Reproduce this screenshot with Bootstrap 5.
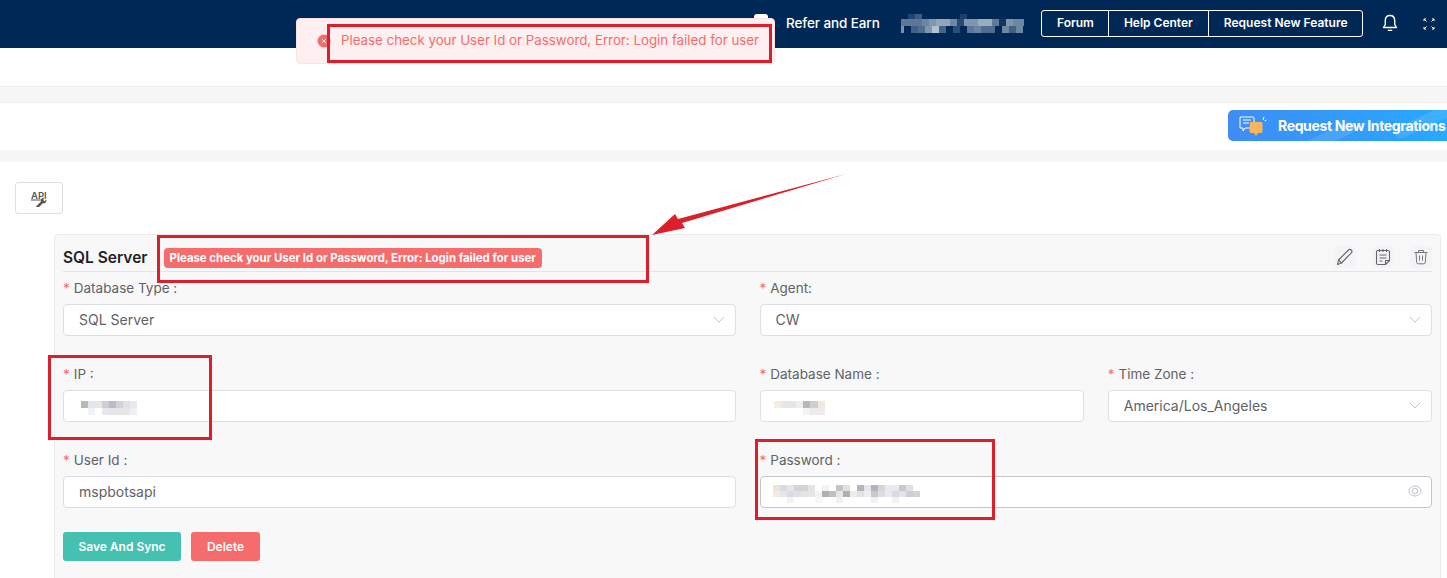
<!DOCTYPE html>
<html lang="en">
<head>
  <meta charset="UTF-8">
  <meta name="viewport" content="width=device-width, initial-scale=1">
  <title>SQL Server Integration</title>
  <link href="https://cdn.jsdelivr.net/npm/bootstrap@5.3.3/dist/css/bootstrap.min.css" rel="stylesheet">
  <style>
    html, body { height: 100%; overflow: hidden; }
    body { font-family: Inter, "Liberation Sans", sans-serif; font-size: 14px; color: #606266; background: #fff; position: relative; }

    .top-header { height: 48px; background: #002856; color: #fff; padding-left: 754px; }
    .refer-icon { width: 14px; height: 20px; background: #fff; border-radius: 3px; margin-right: 18px; }
    .refer-text { font-size: 13.5px; font-weight: 500; width: 115px; letter-spacing: -.1px; margin-top: -2px; }
    .user-blur { width: 123px; height: 19px; margin-right: 17px; margin-top: -1px; }
    .link-group { height: 27px; border: 1px solid #fff; border-radius: 3px; margin-right: 18px; margin-top: -1px; }
    .link-group a { color: #fff; font-size: 12px; font-weight: 600; text-decoration: none; padding: 0 15px; line-height: 23px; }
    .link-group a:first-child { padding-right: 14px; }
    .link-group a + a { border-left: 1px solid #fff; }
    .bell-icon { margin-right: 24px; margin-top: -2px; }

    .blank-strip { height: 38px; background: #fff; }
    .gray-strip { height: 16px; background: #f7f7f7; border-top: 1px solid #eee; }
    .action-strip { height: 48px; background: #fff; border-top: 1px solid #efefef; box-shadow: 0 1px 2px rgba(0,0,0,.06); padding-top: 7px; }
    .gray-strip-2 { height: 12px; background: #f7f7f7; }

    .integration-btn { position: relative; width: 219px; height: 31px; margin-left: auto; border-radius: 5px 0 0 5px; color: #fff; font-size: 14px; font-weight: 700; letter-spacing: -.36px; white-space: nowrap; overflow: hidden; padding-left: 11px; background: linear-gradient(90deg, #3f8cf4, #27a9ff); }
    .integration-btn::before, .integration-btn::after { content: ""; position: absolute; height: 12px; border-radius: 6px; background: rgba(255,255,255,.1); transform: rotate(-25deg); }
    .integration-btn::before { width: 70px; left: 60px; top: 24px; }
    .integration-btn::after { width: 60px; left: 165px; top: 6px; }
    .integration-btn svg { margin-right: 11px; flex: none; position: relative; z-index: 1; }
    .integration-btn span { position: relative; z-index: 1; }

    .page-body { padding: 20px 6px 0 15px; }
    .api-btn { width: 48px; height: 32px; padding: 0; border: 1px solid #dcdfe6; border-radius: 3px; background: #fff; }
    .db-panel { margin: 20px 0 0 39px; padding: 0 8px 40px; background: #f8f8f9; border: 1px solid #ebebeb; border-radius: 4px; }
    .panel-head { height: 37px; border-bottom: 1px solid #e4e4e4; padding-top: 11px; }
    .panel-title { font-size: 15.5px; font-weight: 600; color: #1f1f1f; margin: 0 16px 0 0; }
    .error-tag { background: #f56c6c; color: #fff; font-size: 11.4px; font-weight: 700; padding: 0 6px; height: 20px; line-height: 20px; border-radius: 4px; margin-top: 2px; }
    .tool-btn { width: 22px; height: 22px; background: #f3f4f7; border-radius: 4px; }
    .tool-gap { gap: 16px; }

    .field-row { --bs-gutter-x: 24px; --bs-gutter-y: 0; }
    .form-top { margin-top: 5px; }
    .field-label { height: 27px; margin: 0; line-height: 22px; font-size: 13.5px; color: #606266; display: block; }
    .field-label i { color: #f56c6c; font-style: normal; margin-right: 4px; }
    .field-box { height: 32px; margin-bottom: 27px; background: #fff; border: 1px solid #dcdfe6; border-radius: 4px; padding: 0 10px 2px 15px; font-size: 14px; color: #606266; }
    .field-box svg { flex: none; }
    .blur-ip { margin: 5px 0 0 2px; }
    .blur-db { margin: 5px 0 0 -2px; }
    .blur-pass { margin-top: 5px; }
    .field-pass { border-color: #c4c7ce; padding: 0 9px 2px 12px; }
    .chevron { margin-left: auto; }

    .form-actions { gap: 10px; margin-top: -3px; }
    .btn-save, .btn-del { height: 29px; border: 0; border-radius: 3px; color: #fff; font-size: 12px; font-weight: 600; padding: 0; }
    .btn-save { width: 118px; background: #45c1b2; }
    .btn-del { width: 69px; background: #f56c6c; }

    .error-toast { position: absolute; left: 296px; top: 18px; width: 479px; height: 46px; background: #fef0f0; border: 1px solid #fde2e2; border-radius: 4px; color: #f56c6c; font-size: 13.3px; padding-left: 20px; white-space: nowrap; }
    .toast-dot { flex: none; margin-right: 10px; }
    .note-box { position: absolute; border: 3px solid #dc1f2a; }
    .note-arrow { position: absolute; left: 640px; top: 165px; }
    .note-toast { left: 327px; top: 24px; width: 445px; height: 39px; }
    .note-tag { left: 157px; top: 235px; width: 492px; height: 48px; }
    .note-ip { left: 48px; top: 355px; width: 164px; height: 85px; }
    .note-pass { left: 755px; top: 439px; width: 240px; height: 81px; }
  </style>
</head>
<body>

  <header class="top-header d-flex align-items-center">
    <div class="refer-icon"></div>
    <span class="refer-text">Refer and Earn</span>
    <svg class="user-blur" viewBox="0 0 123 19" shape-rendering="crispEdges">
      <rect x="7" y="0" width="7" height="5" fill="#1f4570"/><rect x="14" y="0" width="7" height="5" fill="#3a5d84"/><rect x="59" y="0" width="7" height="5" fill="#1c4069"/>
      <rect x="0" y="5" width="7" height="7" fill="#5d7896"/><rect x="7" y="5" width="14" height="7" fill="#5b7797"/><rect x="21" y="5" width="7" height="7" fill="#6c86a2"/><rect x="28" y="5" width="7" height="7" fill="#8197ae"/><rect x="35" y="5" width="14" height="7" fill="#93a6ba"/><rect x="49" y="5" width="7" height="7" fill="#6f88a3"/><rect x="56" y="5" width="7" height="7" fill="#264a73"/><rect x="63" y="5" width="14" height="7" fill="#7f96ae"/><rect x="77" y="5" width="14" height="7" fill="#9baebf"/><rect x="91" y="5" width="7" height="7" fill="#617c99"/><rect x="98" y="5" width="7" height="7" fill="#113760"/><rect x="105" y="5" width="7" height="7" fill="#7e95ac"/><rect x="112" y="5" width="11" height="7" fill="#6e87a2"/>
      <rect x="0" y="12" width="3" height="7" fill="#7a91a9"/><rect x="10" y="12" width="7" height="7" fill="#3f6088"/><rect x="17" y="12" width="7" height="7" fill="#4e6d90"/><rect x="24" y="12" width="7" height="7" fill="#7f96ae"/><rect x="31" y="12" width="7" height="7" fill="#b3c2d1"/><rect x="38" y="12" width="7" height="7" fill="#466689"/><rect x="52" y="12" width="7" height="7" fill="#2a4e78"/><rect x="66" y="12" width="7" height="7" fill="#5c7896"/><rect x="73" y="12" width="7" height="7" fill="#6b85a0"/><rect x="80" y="12" width="14" height="7" fill="#4e6d90"/><rect x="101" y="12" width="7" height="7" fill="#6d87a2"/><rect x="108" y="12" width="7" height="7" fill="#3f6088"/><rect x="115" y="12" width="7" height="7" fill="#6d87a2"/>
    </svg>
    <nav class="link-group d-flex">
      <a href="#">Forum</a>
      <a href="#">Help Center</a>
      <a href="#">Request New Feature</a>
    </nav>
    <svg class="bell-icon" width="18" height="18" viewBox="0 0 18 18" fill="none" stroke="#fff" stroke-width="1.4" stroke-linejoin="round">
      <path d="M9 1.5c-3 0-4.700 2.200-4.700 5v4L2.500 13.500h13l-1.800-3v-4c0-2.800-1.700-5-4.700-5z"/><path d="M7 15.800c.5.8 3.500.8 4 0"/>
    </svg>
    <svg width="12" height="12" viewBox="0 0 12 12" fill="none" stroke="#fff" stroke-width="1">
      <path d="M1 1l2.500 2.500M1 1h2M1 1v2M11 1L8.500 3.500M11 1H9M11 1v2M1 11l2.500-2.500M1 11h2M1 11V9M11 11L8.500 8.500M11 11H9M11 11V9"/>
    </svg>
  </header>

  <div class="blank-strip"></div>
  <div class="gray-strip"></div>
  <div class="action-strip d-flex">
    <div class="integration-btn d-flex align-items-center">
      <svg width="28" height="22" viewBox="0 0 28 22">
        <path d="M1 2h13a1 1 0 0 1 1 1v9a1 1 0 0 1-1 1H6l-2 3v-3H1z" fill="none" stroke="#fff" stroke-width="1"/>
        <path d="M4 5h8M4 8h6" stroke="#fff" stroke-width="1"/>
        <path d="M11 7h11a1.500 1.500 0 0 1 1.500 1.500v8A1.500 1.500 0 0 1 22 18h-3l-2 3-2-3h-3a1.500 1.500 0 0 1-1.500-1.500z" fill="#f9b45e"/>
        <path d="M25 2l-1 3M27.500 5l-2 1" stroke="#fff" stroke-width="1"/>
      </svg>
      <span>Request New Integrations</span>
    </div>
  </div>
  <div class="gray-strip-2"></div>

  <main class="page-body">
    <button class="api-btn d-flex align-items-center justify-content-center" type="button">
      <svg width="20" height="18" viewBox="0 0 20 18">
        <text x="2" y="9.500" font-family="Inter, 'Liberation Sans', sans-serif" font-size="9.500" font-weight="600" fill="#555">API</text>
        <path d="M2 11h13" stroke="#555" stroke-width="1"/>
        <path d="M7 17.500l5-5c-.5-2 .8-4 3.300-4l-1.500 2.200 1.500 1.500 2.200-1.500c.3 2.500-1.700 4.200-3.600 3.500l-4.900 4.800z" fill="#555"/>
      </svg>
    </button>

    <section class="db-panel">
      <div class="panel-head d-flex align-items-start">
        <h6 class="panel-title lh-base">SQL Server</h6>
        <span class="error-tag">Please check your User Id or Password, Error: Login failed for user</span>
        <div class="tool-gap d-flex ms-auto">
          <span class="tool-btn d-flex align-items-center justify-content-center">
            <svg width="18" height="18" viewBox="0 0 18 18" fill="none" stroke="#666" stroke-width="1.100" stroke-linejoin="round"><path d="M1.500 16.500l1-4.500L12.500 2c.8-.8 2-.8 2.800 0s.8 2 0 2.800L5.500 15z"/><path d="M2.500 12l3 3"/></svg>
          </span>
          <span class="tool-btn d-flex align-items-center justify-content-center">
            <svg width="16" height="18" viewBox="0 0 16 18" fill="none" stroke="#666" stroke-width="1.100" stroke-linejoin="round"><path d="M3 2.500h10a1.500 1.500 0 0 1 1.500 1.500v8.500l-4 4H3A1.500 1.500 0 0 1 1.500 15V4A1.500 1.500 0 0 1 3 2.500z"/><path d="M14.500 12.500h-4v4M4.500 1v3M8 1v3M11.500 1v3M4.500 7h7M4.500 10h7M4.500 13h3"/></svg>
          </span>
          <span class="tool-btn d-flex align-items-center justify-content-center">
            <svg width="16" height="16" viewBox="0 0 16 16" fill="none" stroke="#777" stroke-width="1"><path d="M1.500 3.500h13M5.500 3.500V1.500h5v2M3 3.500l.7 10a1.500 1.500 0 0 0 1.500 1.300h5.600a1.500 1.500 0 0 0 1.500-1.300l.7-10M6.500 6.500v5M9.500 6.500v5"/></svg>
          </span>
        </div>
      </div>

      <div class="row field-row form-top">
        <div class="col-6">
          <label class="field-label"><i>*</i>Database Type :</label>
          <div class="field-box d-flex align-items-center">SQL Server
            <svg class="chevron" width="12" height="7" viewBox="0 0 12 7" fill="none" stroke="#c0c4cc"><path d="M1 1l5 5 5-5"/></svg>
          </div>
        </div>
        <div class="col-6">
          <label class="field-label"><i>*</i>Agent:</label>
          <div class="field-box d-flex align-items-center">CW
            <svg class="chevron" width="12" height="7" viewBox="0 0 12 7" fill="none" stroke="#c0c4cc"><path d="M1 1l5 5 5-5"/></svg>
          </div>
        </div>

        <div class="col-6">
          <label class="field-label"><i>*</i>IP :</label>
          <div class="field-box d-flex align-items-center">
            <svg class="blur-ip" width="56" height="14" viewBox="0 0 56 14" shape-rendering="crispEdges">
              <rect x="0" y="0" width="7" height="7" fill="#b6b8c0"/><rect x="7" y="0" width="7" height="7" fill="#e2e6ec"/><rect x="14" y="0" width="7" height="7" fill="#e6e6e6"/><rect x="21" y="0" width="7" height="7" fill="#cfcdcd"/><rect x="28" y="0" width="7" height="7" fill="#b9bcc8"/><rect x="35" y="0" width="7" height="7" fill="#d0d2d6"/><rect x="42" y="0" width="7" height="7" fill="#e3e1df"/><rect x="49" y="0" width="7" height="7" fill="#e8e9ee"/>
              <rect x="7" y="7" width="7" height="7" fill="#eff2f6"/><rect x="21" y="7" width="7" height="7" fill="#e5e9ee"/><rect x="28" y="7" width="7" height="7" fill="#e4e6ea"/><rect x="35" y="7" width="14" height="7" fill="#e8e6e4"/><rect x="49" y="7" width="7" height="7" fill="#eef0f3"/>
            </svg>
          </div>
        </div>
        <div class="col-6">
          <div class="row field-row">
            <div class="col-6">
              <label class="field-label"><i>*</i>Database Name :</label>
              <div class="field-box d-flex align-items-center">
                <svg class="blur-db" width="54" height="14" viewBox="0 0 52 14" preserveAspectRatio="none" shape-rendering="crispEdges">
                  <rect x="0" y="0" width="7" height="7" fill="#f8ecdf"/><rect x="7" y="0" width="14" height="7" fill="#e6e6e6"/><rect x="21" y="0" width="7" height="7" fill="#eeeeee"/><rect x="28" y="0" width="7" height="7" fill="#b8b8bc"/><rect x="35" y="0" width="7" height="7" fill="#cfcdcd"/><rect x="42" y="0" width="7" height="7" fill="#f1e8dd"/>
                  <rect x="28" y="7" width="7" height="7" fill="#f3f3f3"/><rect x="35" y="7" width="14" height="7" fill="#ececef"/>
                </svg>
              </div>
            </div>
            <div class="col-6">
              <label class="field-label"><i>*</i>Time Zone :</label>
              <div class="field-box d-flex align-items-center">America/Los_Angeles
                <svg class="chevron" width="12" height="7" viewBox="0 0 12 7" fill="none" stroke="#c0c4cc"><path d="M1 1l5 5 5-5"/></svg>
              </div>
            </div>
          </div>
        </div>

        <div class="col-6">
          <label class="field-label"><i>*</i>User Id :</label>
          <div class="field-box d-flex align-items-center">mspbotsapi</div>
        </div>
        <div class="col-6">
          <label class="field-label"><i>*</i>Password :</label>
          <div class="field-box field-pass d-flex align-items-center">
            <svg class="blur-pass" width="147" height="18" viewBox="0 0 147 18" shape-rendering="crispEdges">
              <rect x="0" y="0" width="7" height="6" fill="#eee3d8"/><rect x="7" y="0" width="7" height="6" fill="#d6dce2"/><rect x="14" y="0" width="7" height="6" fill="#e6e6e8"/><rect x="21" y="0" width="7" height="6" fill="#d2d4da"/><rect x="28" y="0" width="7" height="6" fill="#d4d4d8"/><rect x="35" y="0" width="7" height="6" fill="#e4e4e4"/><rect x="49" y="0" width="7" height="6" fill="#eef3f6"/><rect x="63" y="0" width="7" height="6" fill="#c4c4c9"/><rect x="70" y="0" width="7" height="6" fill="#e4dfdf"/><rect x="84" y="0" width="7" height="6" fill="#b4b5ba"/><rect x="91" y="0" width="7" height="6" fill="#e4e8ec"/><rect x="98" y="0" width="7" height="6" fill="#b4b5ba"/><rect x="105" y="0" width="7" height="6" fill="#d6d6d6"/><rect x="112" y="0" width="14" height="6" fill="#eaeaee"/><rect x="126" y="0" width="7" height="6" fill="#c8c8cd"/><rect x="133" y="0" width="7" height="6" fill="#e0e0e3"/>
              <rect x="0" y="6" width="7" height="6" fill="#f2ece6"/><rect x="7" y="6" width="7" height="6" fill="#e4e6e8"/><rect x="14" y="6" width="7" height="6" fill="#dcdde0"/><rect x="21" y="6" width="7" height="6" fill="#dedfe2"/><rect x="28" y="6" width="14" height="6" fill="#e8e4e0"/><rect x="42" y="6" width="7" height="6" fill="#f0f4f7"/><rect x="49" y="6" width="7" height="6" fill="#b3aeac"/><rect x="56" y="6" width="7" height="6" fill="#c2bfbd"/><rect x="63" y="6" width="7" height="6" fill="#e0e8ec"/><rect x="70" y="6" width="7" height="6" fill="#aeaeb2"/><rect x="77" y="6" width="7" height="6" fill="#f0ebe6"/><rect x="84" y="6" width="7" height="6" fill="#e0e2e5"/><rect x="91" y="6" width="7" height="6" fill="#eceef0"/><rect x="98" y="6" width="7" height="6" fill="#c8c8cd"/><rect x="105" y="6" width="7" height="6" fill="#dddddd"/><rect x="112" y="6" width="7" height="6" fill="#e8e9ec"/><rect x="119" y="6" width="7" height="6" fill="#d5dce8"/><rect x="126" y="6" width="7" height="6" fill="#e2e4e8"/><rect x="133" y="6" width="7" height="6" fill="#cfcfd2"/><rect x="140" y="6" width="7" height="6" fill="#d4d4d8"/>
              <rect x="14" y="12" width="7" height="6" fill="#f2f3f5"/><rect x="42" y="12" width="7" height="6" fill="#f5f7f9"/><rect x="63" y="12" width="7" height="6" fill="#f0f0f0"/><rect x="98" y="12" width="7" height="6" fill="#f0f1f3"/><rect x="119" y="12" width="7" height="6" fill="#eef1f5"/>
            </svg>
            <svg class="chevron" width="14" height="12" viewBox="0 0 14 12" fill="none" stroke="#bfc3ca"><ellipse cx="7" cy="6" rx="6" ry="5"/><circle cx="7" cy="6" r="2.800"/></svg>
          </div>
        </div>
      </div>

      <div class="form-actions d-flex">
        <button class="btn-save" type="button">Save And Sync</button>
        <button class="btn-del" type="button">Delete</button>
      </div>
    </section>
  </main>

  <!-- toast and the red review marks that sit over the page -->
  <div class="error-toast d-flex align-items-center">
    <svg class="toast-dot" width="14" height="14" viewBox="0 0 14 14"><circle cx="7" cy="7" r="6.500" fill="#f56c6c"/><path d="M5 5l4 4M9 5l-4 4" stroke="#fff" stroke-width="1"/></svg>
    <span>Please check your User Id or Password, Error: Login failed for user</span>
  </div>

  <div class="note-box note-toast"></div>
  <div class="note-box note-tag"></div>
  <div class="note-box note-ip"></div>
  <div class="note-box note-pass"></div>
  <svg class="note-arrow" width="215" height="80" viewBox="0 0 215 80">
    <path d="M206 9L42 58l3 5L12 70l23-21 3 5z" fill="#dc1f2a"/>
  </svg>
</body>
</html>
